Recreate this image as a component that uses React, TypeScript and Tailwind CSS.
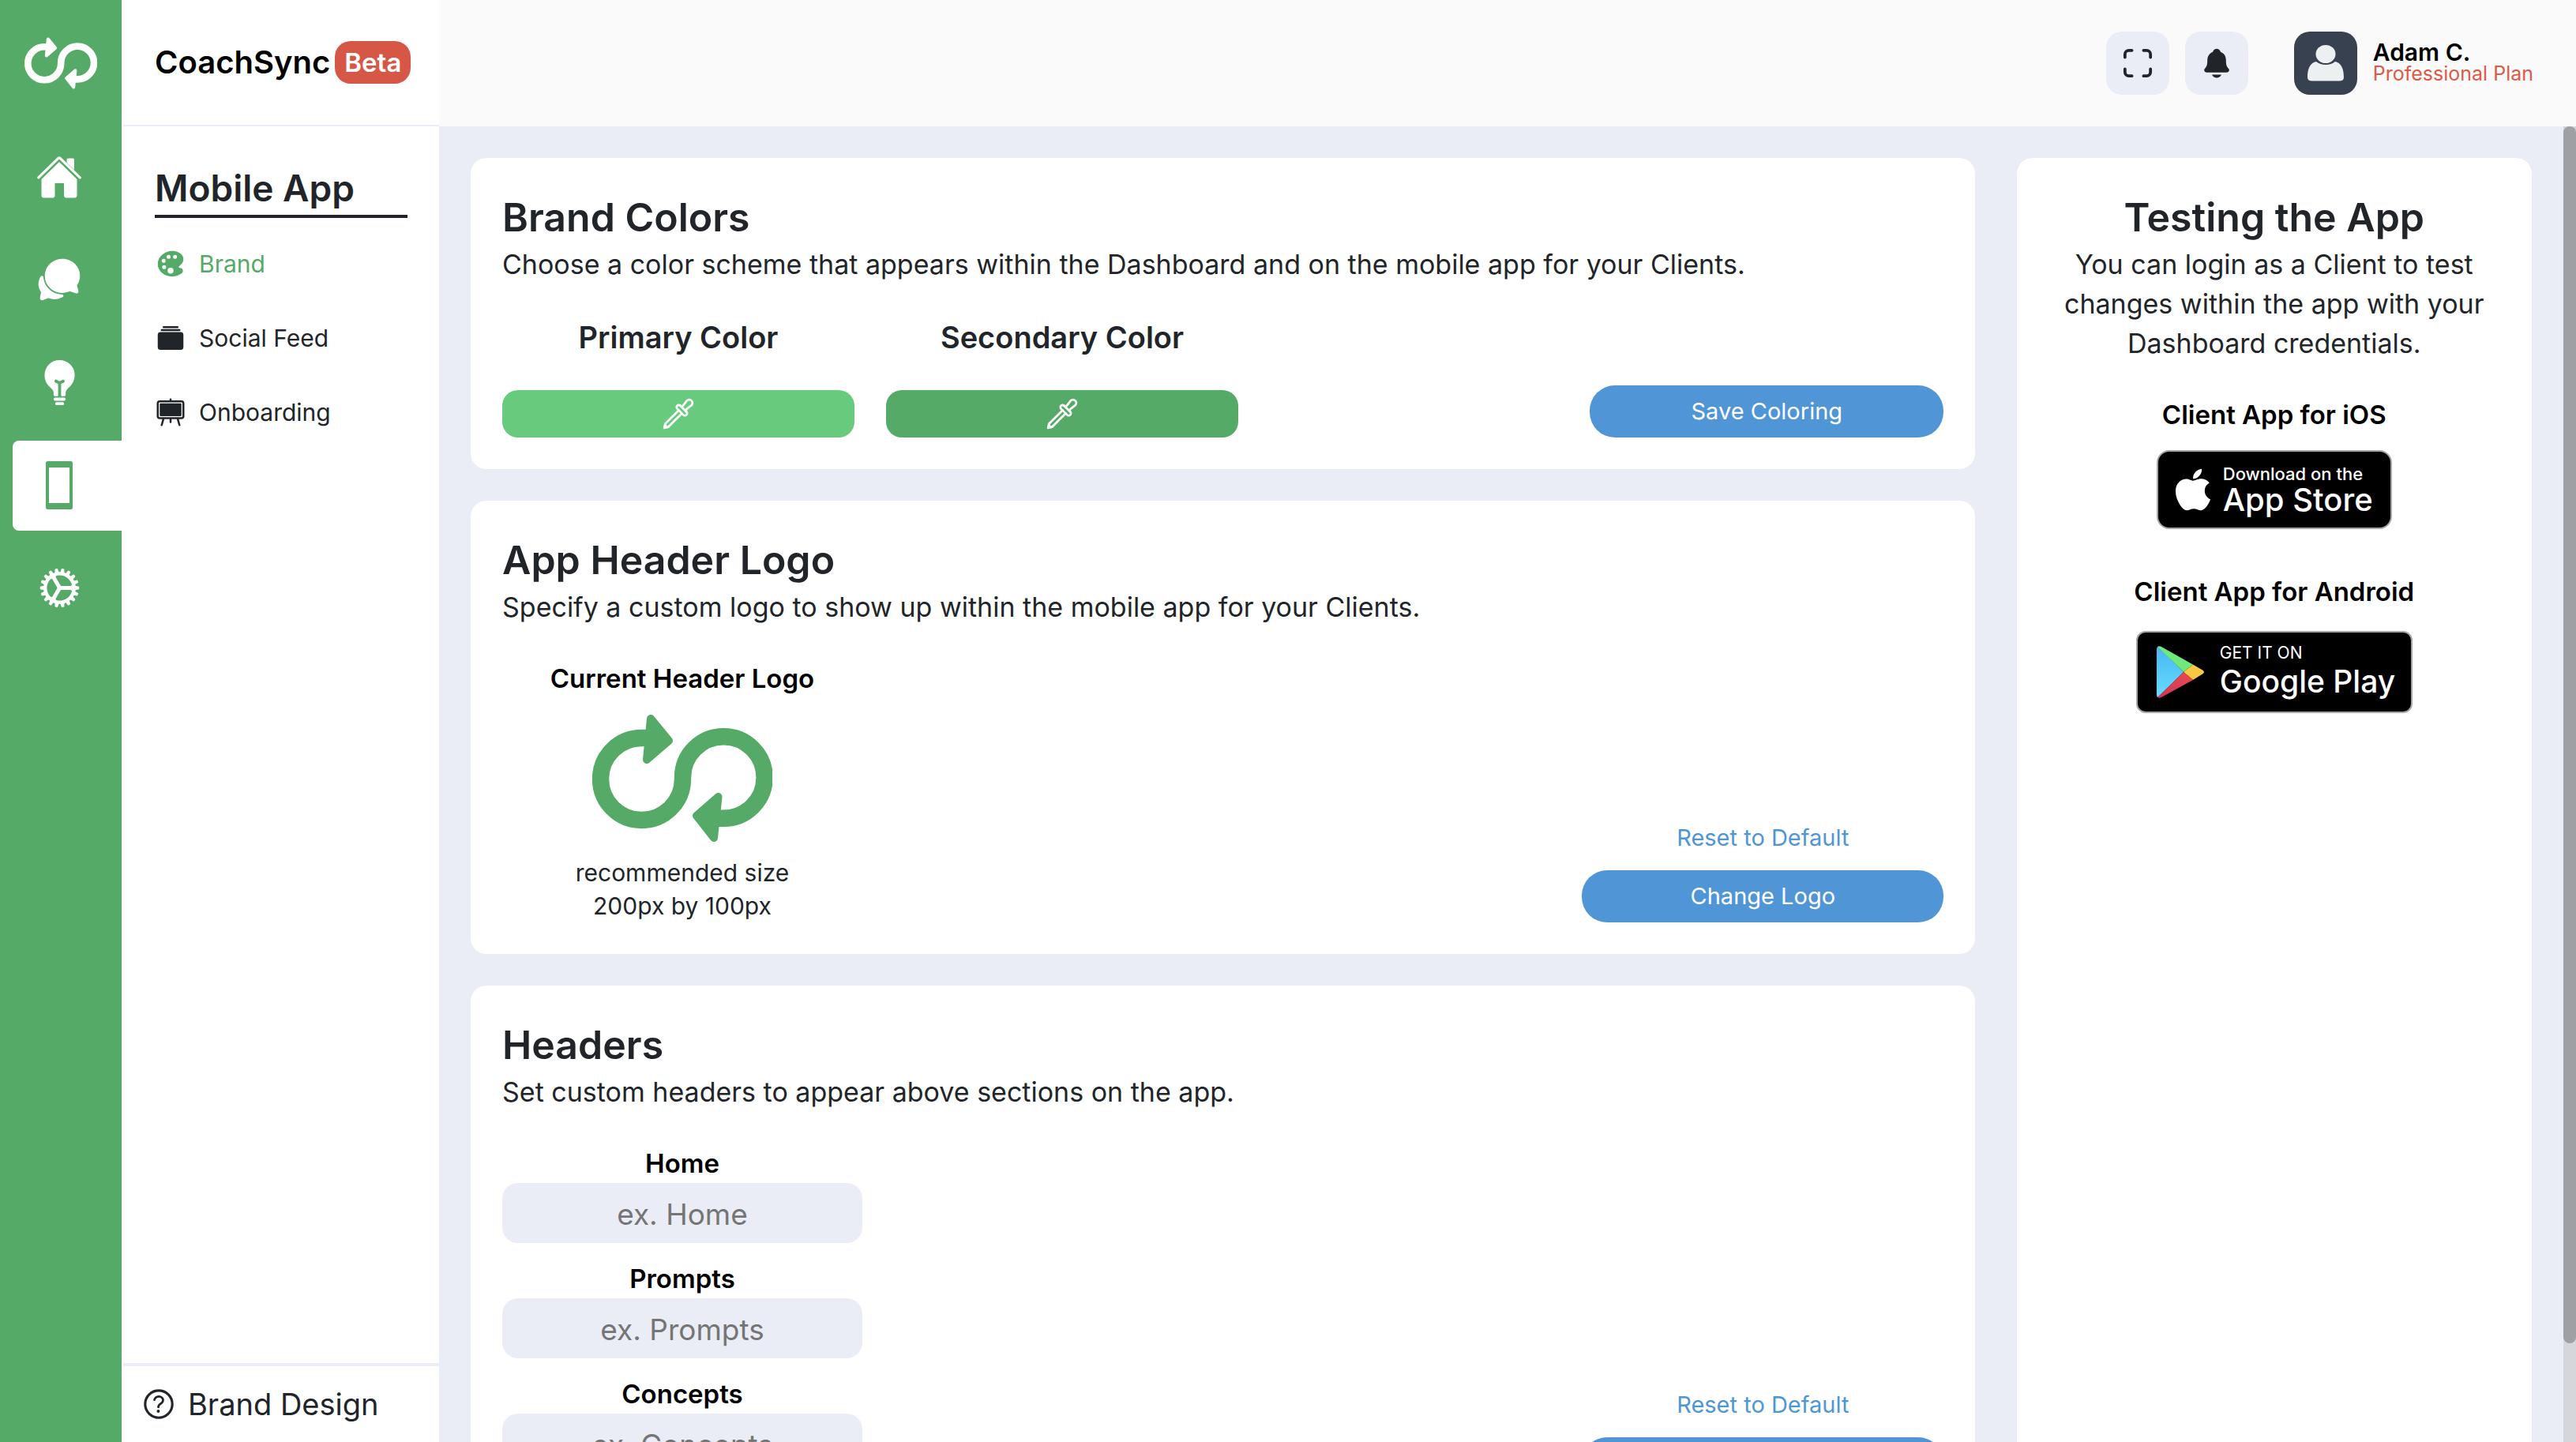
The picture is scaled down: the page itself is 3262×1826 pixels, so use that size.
import React from "react";
import {
  IoAlbums,
  IoBulb,
  IoChatbubbles,
  IoCog,
  IoColorPalette,
  IoEasel,
  IoEyedropOutline,
  IoHelpCircleOutline,
  IoNotifications,
  IoScan,
} from "react-icons/io5";
import { FaApple } from "react-icons/fa";

function LoopLogo({ className }: { className: string }) {
  return (
    <svg viewBox="0 0 228 162" className={className} aria-hidden="true" fill="none" stroke="currentColor">
      <path
        d="M72 30.5H62.5A52 52 0 1 0 114.5 82.5V80.5A51.8 51.8 0 1 1 166 132.3H156"
        strokeWidth="21.4"
      />
      <path d="M74 6L97 34L69 58Z" fill="currentColor" strokeWidth="10" strokeLinejoin="round" />
      <path d="M159.5 105L132 129L154 157Z" fill="currentColor" strokeWidth="10" strokeLinejoin="round" />
    </svg>
  );
}

function HouseIcon() {
  return (
    <svg viewBox="0 0 56 53" className="h-[53px] w-[56px]" aria-hidden="true">
      <path
        d="M28 7L50.500 29V49.500Q50.500 52.500 47.500 52.500H37Q34 52.500 34 49.500V34H22.500V49.500Q22.500 52.500 19.500 52.500H8.500Q5.500 52.500 5.500 49.500V29Z"
        fill="currentColor"
      />
      <path d="M39 2.500H45.500Q47 2.500 47 4V17L37.500 8V4Q37.500 2.500 39 2.500Z" fill="currentColor" />
      <path
        d="M1.800 26.800L26.600 2.600Q28 1.300 29.400 2.600L54.200 26.800"
        fill="none"
        stroke="currentColor"
        strokeWidth="3.200"
        strokeLinecap="round"
      />
    </svg>
  );
}

function PhoneIcon() {
  return (
    <svg viewBox="0 0 34 61" className="h-[61px] w-[34px]" aria-hidden="true">
      <path
        fill="currentColor"
        fillRule="evenodd"
        d="M2.5 0H31.5A2.5 2.5 0 0 1 34 2.5V58.5A2.5 2.5 0 0 1 31.5 61H2.5A2.5 2.5 0 0 1 0 58.5V2.5A2.5 2.5 0 0 1 2.5 0ZM4 8V53H30V8Z"
      />
    </svg>
  );
}

function PersonIcon() {
  return (
    <svg viewBox="0 0 80 80" className="size-full" aria-hidden="true" fill="#ecf0f1">
      <ellipse cx="40" cy="28.5" rx="12.5" ry="11.5" />
      <path d="M28 38C18 40 17 52 17 58Q17 62.5 23 62.5H57Q63 62.5 63 58C63 52 62 40 52 38Q47 42 40 42Q33 42 28 38Z" />
    </svg>
  );
}

function PlayIcon() {
  return (
    <svg viewBox="0 0 60 66" className="h-[66px] w-[60px]" aria-hidden="true">
      <defs>
        <linearGradient id="play-blue" x1="0" y1="0" x2="0" y2="1">
          <stop offset="0" stopColor="#4cb5f5" />
          <stop offset="1" stopColor="#62defc" />
        </linearGradient>
        <linearGradient id="play-red" x1="0" y1="1" x2="1" y2="0">
          <stop offset="0" stopColor="#c9355a" />
          <stop offset="1" stopColor="#ee4a4c" />
        </linearGradient>
      </defs>
      <path d="M1.5 1L34 33L1.5 65Q0 64.5 0 62V4Q0 1.5 1.5 1Z" fill="url(#play-blue)" />
      <path d="M1 1Q3-.5 6 1L46 23.5L34 33Z" fill="#6fe87c" />
      <path d="M46 23.5L58 30.5Q62 33 58 35.5L46 43L34 33Z" fill="#f8c843" />
      <path d="M34 33L46 43L6 65Q3 66.5 1 65Z" fill="url(#play-red)" />
    </svg>
  );
}

const railItems = [
  { label: "Home", icon: <HouseIcon /> },
  { label: "Messages", icon: <IoChatbubbles className="size-[60px]" /> },
  { label: "Ideas", icon: <IoBulb className="size-[61px]" /> },
  { label: "Mobile App", icon: <PhoneIcon />, active: true },
  { label: "Settings", icon: <IoCog className="size-[61px]" /> },
];

const menuItems = [
  { label: "Brand", icon: <IoColorPalette className="size-[40px]" />, active: true },
  { label: "Social Feed", icon: <IoAlbums className="size-[40px]" /> },
  { label: "Onboarding", icon: <IoEasel className="size-[40px]" /> },
];

function Card({ title, text, children }: { title: string; text: string; children: React.ReactNode }) {
  return (
    <section className="rounded-[20px] bg-white p-10">
      <h2 className="text-[50px] leading-[70px] font-semibold">{title}</h2>
      <p className="text-[34px] leading-[50px]">{text}</p>
      <div className="mt-10 flex items-end justify-between">{children}</div>
    </section>
  );
}

function ColorPick({ label, id, className }: { label: string; id: string; className: string }) {
  return (
    <div className="flex w-[446px] flex-col gap-10">
      <h3 id={id} className="text-center text-[38px] leading-[54px] font-semibold">
        {label}
      </h3>
      <button type="button" aria-labelledby={id} className={className}>
        <IoEyedropOutline className="size-[44px]" />
      </button>
    </div>
  );
}

function Actions({ label }: { label: string }) {
  return (
    <div className="flex w-[458px] flex-col items-center gap-5 text-[29px] leading-[42px]">
      <a href="#reset" className="text-[#4f96d6]">
        Reset to Default
      </a>
      <button type="button" className="h-[66px] w-full rounded-[32px] bg-[#5096d6] text-white">
        {label}
      </button>
    </div>
  );
}

export default function App() {
  return (
    <div className="flex h-screen overflow-hidden bg-[#eaedf5] font-['Inter',sans-serif] text-[#212529]">
      <nav aria-label="Main" className="flex w-[154px] shrink-0 flex-col bg-[#55aa67] text-white">
        <a href="#top" aria-label="CoachSync" className="flex h-40 items-center justify-center">
          <LoopLogo className="w-[92px]" />
        </a>
        <ul className="mt-2 ml-4 flex flex-col gap-4">
          {railItems.map((item) => (
            <li key={item.label}>
              <a
                href="#main"
                aria-label={item.label}
                className={
                  item.active
                    ? "flex h-[114px] items-center justify-center rounded-l-lg bg-white pr-5 pb-0.5 text-[#55aa67]"
                    : "flex h-[114px] items-center justify-center pr-5 pb-0.5"
                }
              >
                {item.icon}
              </a>
            </li>
          ))}
        </ul>
      </nav>

      <aside className="flex w-[402px] shrink-0 flex-col border-l-2 border-white bg-white">
        <div className="flex h-40 items-center gap-1.5 border-b-2 border-[#eaedf5] px-10 text-[40px] font-semibold whitespace-nowrap text-black">
          <span>CoachSync</span>
          <span className="rounded-[20px] bg-[#d65745] px-3 text-[33px] leading-[54px] text-white">Beta</span>
        </div>
        <div className="grow px-10 pt-12">
          <h1 className="border-b-4 border-[#212529] pb-1 text-[46px] leading-[60px] font-semibold">Mobile App</h1>
          <ul className="mt-[31px] flex flex-col gap-10">
            {menuItems.map((item) => (
              <li key={item.label}>
                <a
                  href="#section"
                  className={
                    item.active
                      ? "flex h-[54px] items-center gap-4 text-[30px] text-[#55aa67]"
                      : "flex h-[54px] items-center gap-4 text-[30px]"
                  }
                >
                  {item.icon}
                  {item.label}
                </a>
              </li>
            ))}
          </ul>
        </div>
        <a href="#help" className="flex h-[100px] items-center gap-3 border-t-4 border-[#eaedf5] px-5 text-[38px]">
          <IoHelpCircleOutline className="size-[50px]" />
          Brand Design
        </a>
      </aside>

      <div className="flex min-w-0 grow flex-col">
        <header className="flex h-40 shrink-0 items-center justify-end gap-5 bg-[#fafafa] pr-[54px]">
          <button type="button" aria-label="Full screen" className="flex size-20 items-center justify-center rounded-[20px] bg-[#eaedf5]">
            <IoScan className="size-[44px]" />
          </button>
          <button type="button" aria-label="Notifications" className="flex size-20 items-center justify-center rounded-[20px] bg-[#eaedf5]">
            <IoNotifications className="size-[42px]" />
          </button>
          <button type="button" className="ml-[38px] flex items-center gap-5 text-left">
            <span className="size-20 overflow-hidden rounded-[20px] bg-[#38414f]">
              <PersonIcon />
            </span>
            <span className="flex flex-col leading-[27px]">
              <span className="text-[30px] font-semibold text-black">Adam C.</span>
              <span className="text-[25px] text-[#dc5a48]">Professional Plan</span>
            </span>
          </button>
        </header>

        <div className="flex min-h-0 grow">
          <main className="grow overflow-y-auto p-10 [scrollbar-width:none]">
            <div className="flex justify-between">
              <div className="flex w-[73%] flex-col gap-10">
                <Card
                  title="Brand Colors"
                  text="Choose a color scheme that appears within the Dashboard and on the mobile app for your Clients."
                >
                  <div className="flex gap-10">
                    <ColorPick
                      label="Primary Color"
                      id="primary-color"
                      className="flex h-[60px] items-center justify-center rounded-[20px] bg-[#67ca7c] text-white"
                    />
                    <ColorPick
                      label="Secondary Color"
                      id="secondary-color"
                      className="flex h-[60px] items-center justify-center rounded-[20px] bg-[#55aa67] text-white"
                    />
                  </div>
                  <button type="button" className="h-[66px] w-[448px] rounded-[32px] bg-[#5096d6] text-[29px] text-white">
                    Save Coloring
                  </button>
                </Card>

                <Card title="App Header Logo" text="Specify a custom logo to show up within the mobile app for your Clients.">
                  <div className="flex w-[456px] flex-col items-center text-center">
                    <h3 className="text-[33px] leading-[50px] font-semibold text-black">Current Header Logo</h3>
                    <LoopLogo className="mt-5 mb-[18px] w-[228px] text-[#55aa67]" />
                    <p className="text-[30px] leading-[42px]">
                      recommended size
                      <br />
                      200px by 100px
                    </p>
                  </div>
                  <Actions label="Change Logo" />
                </Card>

                <Card title="Headers" text="Set custom headers to appear above sections on the app.">
                  <div className="w-[456px]">
                    {["Home", "Prompts", "Concepts"].map((name) => (
                      <div key={name} className="mb-5 flex flex-col text-center">
                        <label htmlFor={name} className="text-[33px] leading-[50px] font-semibold text-black">
                          {name}
                        </label>
                        <input
                          id={name}
                          type="text"
                          placeholder={"ex. " + name}
                          className="h-[76px] rounded-[20px] bg-[#eaedf5] pt-0.5 text-center text-[37px] placeholder:text-[#757575]"
                        />
                      </div>
                    ))}
                  </div>
                  <Actions label="Save Headers" />
                </Card>
              </div>

              <section className="flex w-1/4 flex-col items-center rounded-[20px] bg-white p-10 text-center">
                <h2 className="text-[50px] leading-[70px] font-semibold">Testing the App</h2>
                <p className="text-[34px] leading-[50px]">
                  You can login as a Client to test changes within the app with your Dashboard credentials.
                </p>
                <h3 className="mt-10 text-[33px] leading-[50px] font-semibold text-black">Client App for iOS</h3>
                <a
                  href="#ios"
                  className="mt-5 flex h-[100px] w-[298px] items-center gap-2 rounded-2xl border-2 border-[#a6a6a6] bg-black pl-3.5 text-left text-white"
                >
                  <FaApple className="size-[60px]" />
                  <span className="flex flex-col whitespace-nowrap">
                    <span className="text-[22px] leading-[26px] font-medium">Download on the</span>
                    <span className="text-[40px] leading-[40px] font-medium">App Store</span>
                  </span>
                </a>
                <h3 className="mt-[54px] text-[33px] leading-[50px] font-semibold text-black">Client App for Android</h3>
                <a
                  href="#android"
                  className="mt-[25px] flex h-[104px] w-[350px] items-center gap-5 rounded-xl border-2 border-[#a6a6a6] bg-black pl-6 text-left text-white"
                >
                  <PlayIcon />
                  <span className="flex flex-col pb-1 whitespace-nowrap">
                    <span className="text-[21px] leading-[28px]">GET IT ON</span>
                    <span className="text-[39px] leading-[44px] font-medium">Google Play</span>
                  </span>
                </a>
              </section>
            </div>
          </main>
          <div aria-hidden="true" className="w-4 shrink-0 bg-[#d5d6dc]">
            <div className="h-[92.5%] rounded-full bg-[#9fa0a4]" />
          </div>
        </div>
      </div>
    </div>
  );
}
